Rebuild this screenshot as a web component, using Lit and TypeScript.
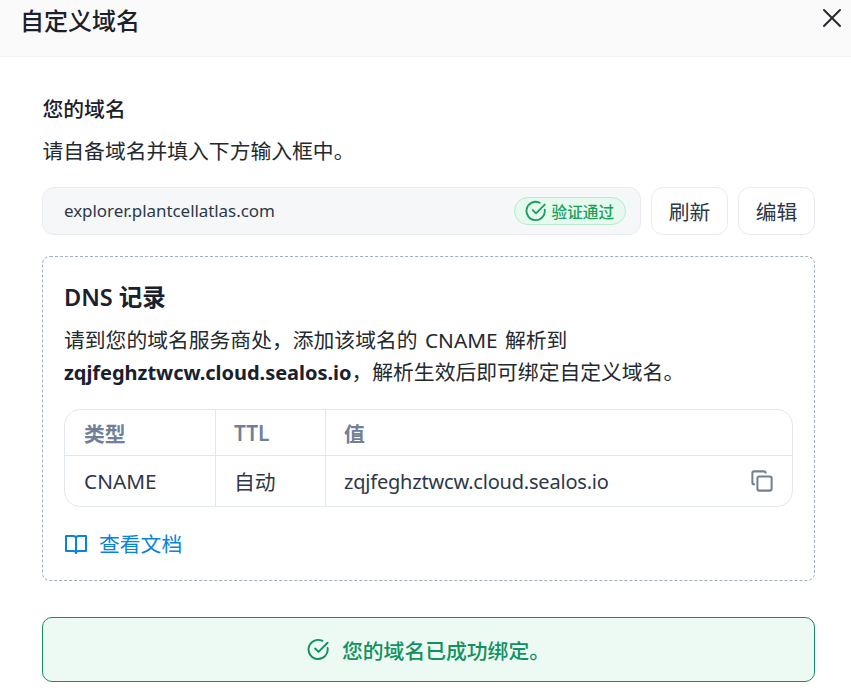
import { LitElement, html, css } from 'lit';
import { customElement } from 'lit/decorators.js';

const checkIcon = (size: number) => html`
  <svg width=${size} height=${size} viewBox="0 0 24 24" fill="none" stroke="currentColor" stroke-width="2" stroke-linecap="round" stroke-linejoin="round">
    <path d="M21.5 10.5A10 10 0 1 1 16 3"></path>
    <path d="M8.5 11l3.5 3.5L21.5 5"></path>
  </svg>
`;

@customElement('app-root')
export class AppRoot extends LitElement {
  static styles = css`
    * {
      margin: 0;
      padding: 0;
      box-sizing: border-box;
    }

    :host {
      display: block;
      width: 851px;
      height: 688px;
      overflow: hidden;
      background: #fff;
      color: #1a202c;
      font-family: "Noto Sans", "Noto Sans CJK SC", sans-serif;
    }

    .header {
      height: 57px;
      display: flex;
      justify-content: space-between;
      padding: 5px 9px 0 20px;
      background: #fafafa;
      border-bottom: 1px solid #f0f1f4;
    }

    .header__title {
      font-size: 24px;
      line-height: 32px;
      font-weight: 500;
    }

    .header__close {
      color: #24292f;
      margin-top: 3px;
      height: 20px;
    }

    .body {
      padding: 39px 36px 0 42px;
    }

    .label {
      font-size: 20.8px;
      line-height: 26px;
      font-weight: 500;
      padding-left: 0.5px;
    }

    .hint {
      font-size: 20.8px;
      line-height: 28px;
      margin-top: 15px;
      padding-left: 0.5px;
      color: #24292f;
    }

    .domain-row {
      display: flex;
      gap: 10px;
      margin-top: 22px;
    }

    .domain {
      flex: 1;
      height: 48px;
      display: flex;
      align-items: center;
      justify-content: space-between;
      padding: 0 14px 0 21px;
      background: #f6f7f9;
      border: 1px solid #e8ebf0;
      border-radius: 12px;
      font-size: 17px;
      letter-spacing: -0.07px;
      color: #2d3748;
    }

    .domain__text {
      margin-top: -2px;
    }

    .badge {
      display: flex;
      align-items: center;
      gap: 5px;
      height: 28px;
      padding: 0 11px 0 10px;
      font-size: 15.6px;
      font-weight: 500;
      letter-spacing: 0;
      color: #16a05a;
      background: #e6f9ee;
      border: 1px solid #b5edcc;
      border-radius: 14px;
    }

    .btn {
      width: 77px;
      height: 48px;
      display: flex;
      align-items: center;
      justify-content: center;
      font-size: 20.8px;
      color: #2d3748;
      background: #fff;
      border: 1px solid #e8ebf0;
      border-radius: 12px;
    }

    .dns {
      margin-top: 21px;
      height: 325px;
      padding: 25px 21px 0;
      border: 1px dashed #a0aec0;
      border-radius: 8px;
    }

    .dns__title {
      font-size: 23.5px;
      line-height: 30px;
      font-weight: 600;
    }

    .dns__desc {
      font-size: 20.8px;
      line-height: 32px;
      word-spacing: 2px;
      margin-top: 12px;
      color: #24292f;
    }

    .dns__desc strong {
      font-size: 20px;
      letter-spacing: -0.03px;
      font-weight: 700;
      color: #1a202c;
    }

    .table {
      margin-top: 20px;
      border: 1px solid #e2e8f0;
      border-radius: 16px;
      display: grid;
      grid-template-columns: 151px 110px 1fr;
      grid-template-rows: 46px 50px;
      font-size: 20.8px;
    }

    .cell {
      display: flex;
      align-items: center;
      justify-content: space-between;
      padding: 0 19px 0 18px;
      color: #2d3748;
      border-right: 1px solid #e2e8f0;
    }

    .cell:nth-child(3n + 1) {
      padding-left: 19px;
    }

    .cell:nth-child(3n) {
      border-right: none;
    }

    .cell--head {
      color: #718096;
      font-weight: 600;
      border-bottom: 1px solid #e2e8f0;
    }

    .cell__value {
      font-size: 20px;
      letter-spacing: -0.2px;
    }

    .copy {
      color: #718096;
      height: 22px;
    }

    .docs {
      display: flex;
      align-items: center;
      gap: 11px;
      margin-top: 22px;
      font-size: 20.8px;
      line-height: 30px;
      color: #0884dd;
    }

    .success {
      margin-top: 36px;
      height: 65px;
      display: flex;
      align-items: center;
      justify-content: center;
      gap: 12px;
      font-size: 20.8px;
      font-weight: 500;
      color: #0f9160;
      background: #ecfaf3;
      border: 1px solid #0f9160;
      border-radius: 10px;
    }
  `;

  render() {
    return html`
      <div class="header">
        <div class="header__title">自定义域名</div>
        <svg class="header__close" width="20" height="20" viewBox="0 0 20 20" fill="none" stroke="currentColor" stroke-width="2" stroke-linecap="round">
          <path d="M2 2l16 16M18 2L2 18"></path>
        </svg>
      </div>
      <div class="body">
        <div class="label">您的域名</div>
        <p class="hint">请自备域名并填入下方输入框中。</p>
        <div class="domain-row">
          <div class="domain">
            <span class="domain__text">explorer.plantcellatlas.com</span>
            <span class="badge">${checkIcon(22)}验证通过</span>
          </div>
          <div class="btn">刷新</div>
          <div class="btn">编辑</div>
        </div>
        <div class="dns">
          <div class="dns__title">DNS 记录</div>
          <p class="dns__desc">
            请到您的域名服务商处，添加该域名的 CNAME 解析到<br />
            <strong>zqjfeghztwcw.cloud.sealos.io</strong>，解析生效后即可绑定自定义域名。
          </p>
          <div class="table">
            <div class="cell cell--head">类型</div>
            <div class="cell cell--head">TTL</div>
            <div class="cell cell--head">值</div>
            <div class="cell">CNAME</div>
            <div class="cell">自动</div>
            <div class="cell">
              <span class="cell__value">zqjfeghztwcw.cloud.sealos.io</span>
              <svg class="copy" width="22" height="22" viewBox="0 0 24 24" fill="none" stroke="currentColor" stroke-width="2.2" stroke-linecap="round" stroke-linejoin="round">
                <rect x="7" y="7" width="15.5" height="15.5" rx="2"></rect>
                <path d="M3.5 15.5C2.5 15.5 1.5 14.6 1.5 13.5V3.5C1.5 2.4 2.4 1.5 3.5 1.5H14c1 0 1.8.7 2 1.5"></path>
              </svg>
            </div>
          </div>
          <div class="docs">
            <svg width="24" height="24" viewBox="0 0 24 24" fill="none" stroke="currentColor" stroke-width="2" stroke-linecap="round" stroke-linejoin="round">
              <path d="M12 21V6.5C12 5 10.8 4 9.5 4H2v15h7.5c1.4 0 2.5 1 2.5 2z"></path>
              <path d="M12 21V6.5C12 5 13.2 4 14.5 4H22v15h-7.5c-1.4 0-2.5 1-2.5 2z"></path>
            </svg>
            查看文档
          </div>
        </div>
        <div class="success">${checkIcon(23)}您的域名已成功绑定。</div>
      </div>
    `;
  }
}
